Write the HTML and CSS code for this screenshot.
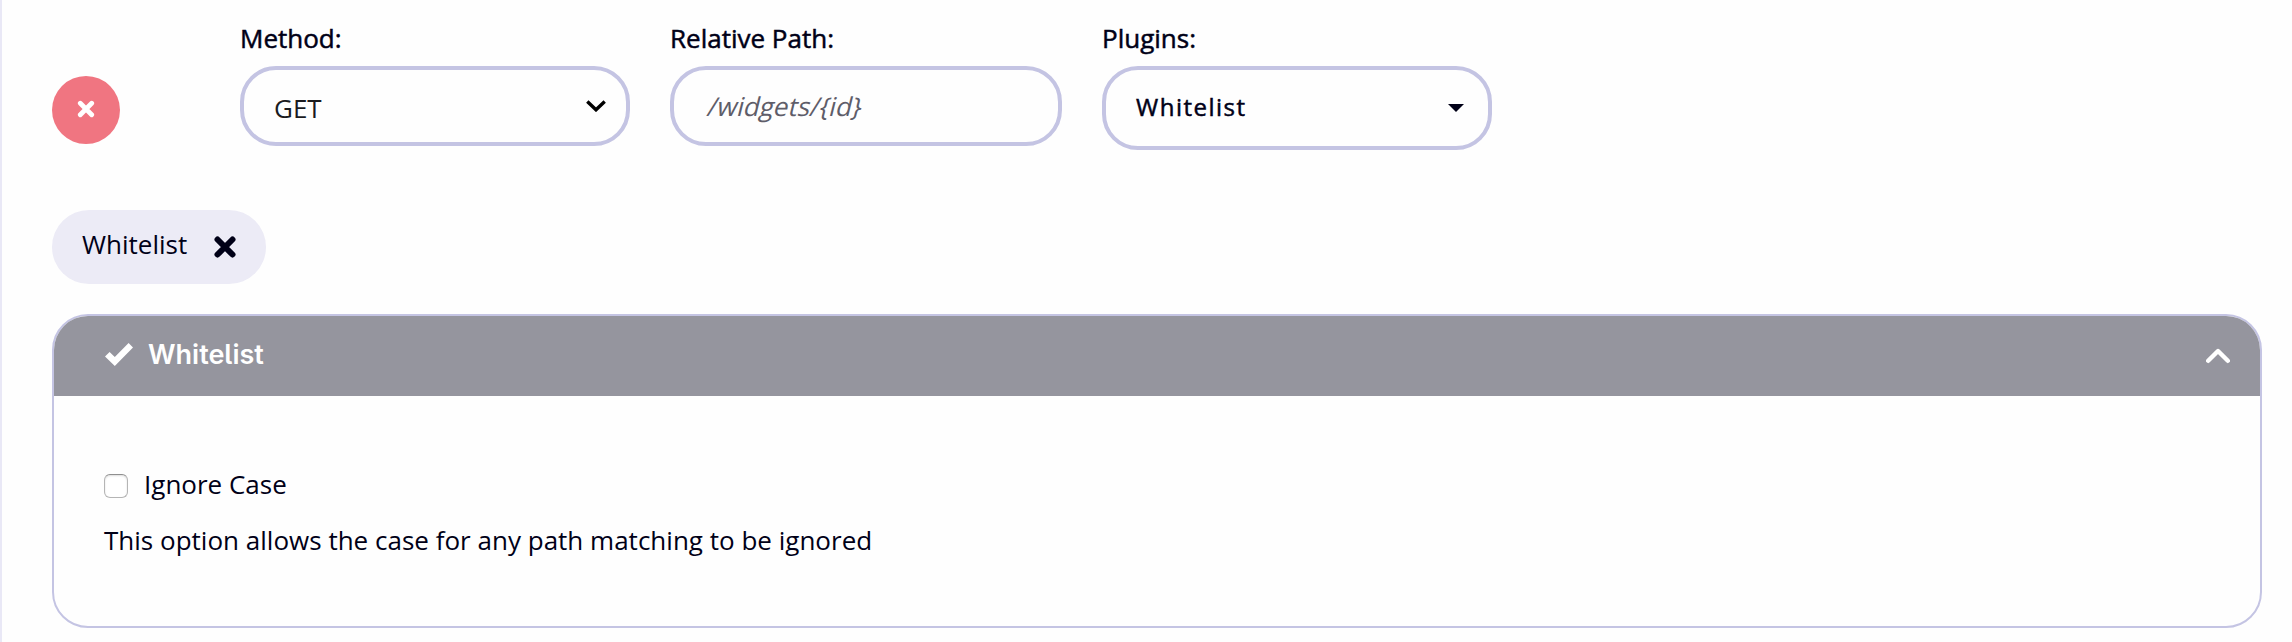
FILE: index.html
```html
<!DOCTYPE html>
<html lang="en">
<head>
<meta charset="utf-8">
<title>Whitelist plugin</title>
<link rel="stylesheet" href="styles.css">
</head>
<body>
<main class="panel">
  <div class="row">
    <button class="remove" aria-label="Remove">
      <svg width="18" height="18" viewBox="0 0 18 18"><path d="M3.3 3.3 14.7 14.7M14.7 3.3 3.3 14.7"/></svg>
    </button>
    <div class="fields">
      <div class="field">
        <span class="label">Method:</span>
        <div class="control method">
          <span class="get">GET</span>
          <svg width="20" height="12" viewBox="0 0 20 12"><path class="chevron" d="M1.3 1.5 10 9.8 18.7 1.5"/></svg>
        </div>
      </div>
      <div class="field">
        <span class="label">Relative Path:</span>
        <div class="control"><span class="placeholder">/widgets/{id}</span></div>
      </div>
      <div class="field">
        <span class="label">Plugins:</span>
        <div class="control plugins">
          <span class="selected">Whitelist</span>
          <svg width="16" height="8" viewBox="0 0 16 8"><path class="caret" d="M0 0h16L8 8z"/></svg>
        </div>
      </div>
    </div>
  </div>
  <div class="chip">
    <span class="chip-text">Whitelist</span>
    <svg width="22" height="22" viewBox="0 0 22 22"><path d="M3.5 3.5 18.5 18.5M18.5 3.5 3.5 18.5"/></svg>
  </div>
  <section class="card">
    <header class="card-head">
      <svg class="check" width="28" height="24" viewBox="0 0 28 24"><path d="M0 13.5 4.6 9 9.8 14 23.6 0 28 4.6 9.8 23z"/></svg>
      <h2 class="title">Whitelist</h2>
      <svg class="up" width="24" height="16" viewBox="0 0 24 16"><path d="M2.2 12.8 12 3 21.8 12.8"/></svg>
    </header>
    <div class="card-body">
      <label class="option"><span class="box"></span><span class="option-text">Ignore Case</span></label>
      <p class="desc">This option allows the case for any path matching to be ignored</p>
    </div>
  </section>
</main>
</body>
</html>
```
FILE: styles.css
```css
* { box-sizing: border-box; }
body {
  margin: 0;
  background: #fefefe;
  color: #000017;
  font: 26px/36px "Open Sans", "Noto Sans", sans-serif;
  white-space: nowrap;
}
svg { display: block; flex: none; }
.panel {
  height: 642px;
  border-left: 2px solid #e9e8f6;
  padding: 20px 30px 0 50px;
}
.row { display: flex; height: 130px; }
.remove {
  width: 68px;
  height: 68px;
  margin: 56px 120px 0 0;
  padding: 0 0 2px;
  border: 0;
  border-radius: 50%;
  background: #f07581;
  display: grid;
  place-items: center;
}
.remove path { stroke: #fff; stroke-width: 4.8; stroke-linecap: round; }
.fields {
  width: 1252px;
  display: grid;
  grid-template-columns: 390px 392px 390px;
  gap: 40px;
}
.label {
  display: block;
  margin-bottom: 10px;
  -webkit-text-stroke: 0.5px #000017;
}
.control {
  height: 80px;
  border: 4px solid #c4c4e3;
  border-radius: 36px;
  padding: 0 32px;
  display: flex;
  align-items: center;
  justify-content: space-between;
}
.method { padding: 0 20px 0 30px; }
.get { color: #1a1b1f; padding-top: 4px; }
.chevron { fill: none; stroke: #000; stroke-width: 3.4; }
.placeholder {
  color: #5e5d69;
  transform: skewX(-14deg);
  transform-origin: 0 78%;
}
.plugins { height: 84px; padding: 0 24px 0 30px; }
.selected { font-size: 24px; letter-spacing: 1.5px; -webkit-text-stroke: 0.5px #000017; padding-bottom: 2px; }
.caret { fill: #000017; }
.chip {
  width: 214px;
  height: 74px;
  margin-top: 60px;
  border-radius: 37px;
  background: #ecebf6;
  padding: 0 30px;
  display: flex;
  align-items: center;
  justify-content: space-between;
}
.chip-text { padding-bottom: 6px; }
.chip path { stroke: #000017; stroke-width: 6; stroke-linecap: round; }
.card {
  height: 314px;
  margin-top: 30px;
  border: 2px solid #c4c4e3;
  border-radius: 36px;
  overflow: hidden;
}
.card-head {
  height: 80px;
  background: #95959e;
  color: #fff;
  padding: 0 30px 0 50px;
  display: flex;
  align-items: center;
}
.check { fill: #fff; margin: 0 0 3px 1px; }
.title {
  margin: 0 auto 2px 15px;
  font: 600 27px/36px Inter, "Open Sans", sans-serif;
  font-feature-settings: "cv05";
}
.up path { fill: none; stroke: #fff; stroke-width: 4.4; stroke-linecap: round; stroke-linejoin: round; }
.card-body { padding: 70px 50px 0; }
.option { display: flex; align-items: center; gap: 16px; height: 36px; }
.box {
  width: 24px;
  height: 24px;
  margin-top: 3px;
  border: 1px solid #b5b5b5;
  border-top-color: #8f8f8f;
  border-radius: 6px;
  background: #fff;
  box-shadow: inset 0 1px 2px #ddd;
}
.desc { margin: 20px 0 0; letter-spacing: 0.01px; }
```
